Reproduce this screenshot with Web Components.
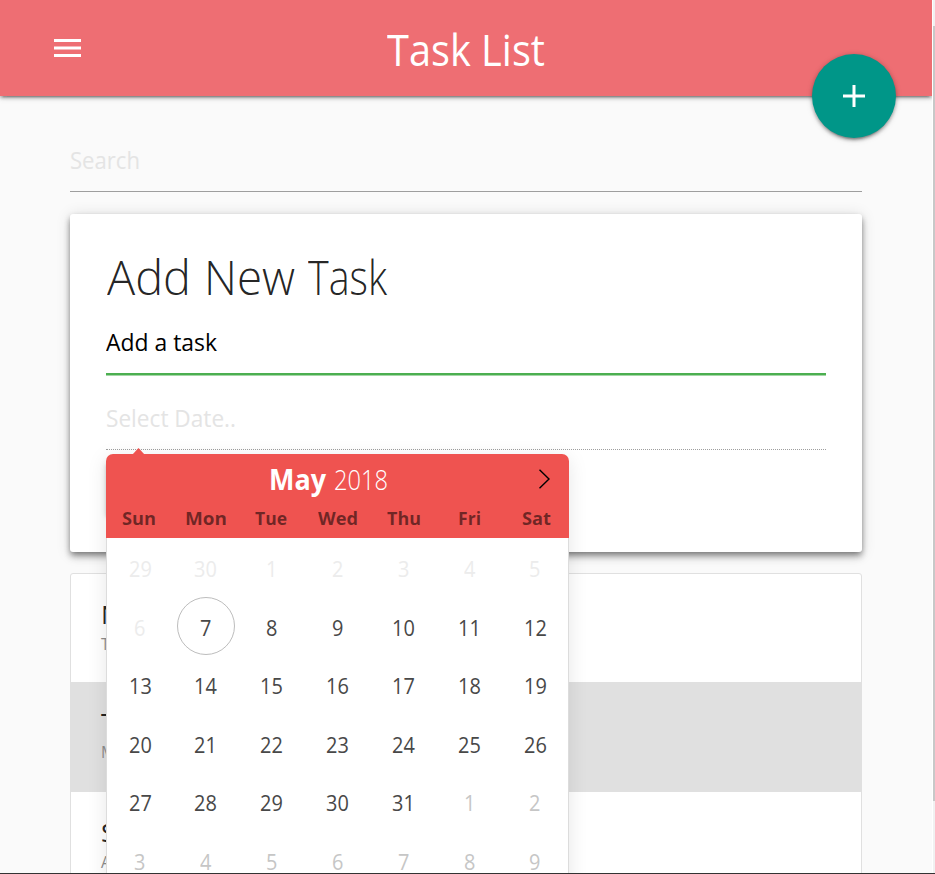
<!DOCTYPE html>
<html lang="en">
<head>
<meta charset="utf-8">
<title>Task List</title>
<style>
body{margin:0;background:#fafafa;font-family:"Open Sans","Noto Sans",sans-serif;color:rgba(0,0,0,.87)}
</style>
</head>
<body>
<task-app></task-app>
<script>
const define = (name, html, setup) => {
  const t = document.createElement('template');
  t.innerHTML = html;
  customElements.define(name, class extends HTMLElement {
    connectedCallback() {
      if (this.shadowRoot) return;
      this.attachShadow({mode: 'open'}).append(t.content.cloneNode(true));
      if (setup) setup(this, this.shadowRoot);
    }
  });
};

// Text condensed or widened horizontally to the width in its "w" attribute.
define('fit-text', `<style>
:host{display:inline-block;white-space:nowrap}
span{display:inline-block;transform-origin:0 50%}
</style><span><slot></slot></span>`, (el, root) => {
  const s = root.querySelector('span'), w = +el.getAttribute('w');
  const n = s.offsetWidth ? s.getBoundingClientRect().width : w;
  s.style.transform = 'scaleX(' + w / n + ')';
  el.style.width = w + 'px';
});

define('app-bar', `<style>
:host{display:grid;grid-template-columns:1fr auto 1fr;height:96px;background:#ee6e73;color:#fff;position:relative;z-index:1;
box-shadow:0 3px 3px 0 rgba(0,0,0,.14),0 1.5px 7.5px 0 rgba(0,0,0,.12),0 4.5px 1.5px -3px rgba(0,0,0,.2),0 1px 3px rgba(0,0,0,.2)}
.menu{margin:39px 0 0 54px;width:27px;height:18px}
.title{font-size:43.5px;line-height:100px}
.fab{position:absolute;left:812px;top:54px;width:84px;height:84px;border-radius:50%;background:#009688;display:grid;place-items:center;
box-shadow:0 3px 3px 0 rgba(0,0,0,.14),0 1.5px 7.5px 0 rgba(0,0,0,.12),0 4.5px 1.5px -3px rgba(0,0,0,.2),0 1px 4px rgba(0,0,0,.2)}
</style>
<svg class="menu" viewBox="0 0 27 18"><path d="M0 0h27v3H0zM0 7.5h27v3H0zM0 15h27v3H0z" fill="#fff"/></svg>
<div class="title"><slot></slot></div>
<div class="fab"><svg width="22" height="22" viewBox="0 0 22 22"><path d="M11 0v22M0 11h22" stroke="#fff" stroke-width="3"/></svg></div>`);

define('text-field', `<style>
:host{display:block;box-sizing:border-box;height:var(--h,63px);font-size:23.5px;line-height:var(--lh,62px);border-bottom:1px solid #9e9e9e;color:#e4e4e4}
:host([active]){height:64px;color:#000;border-bottom:2px solid #4caf50;box-shadow:0 1px 0 0 #a5d6a7;margin-bottom:1px}
:host([dotted]){border-bottom-style:dotted}
fit-text{display:block}
</style><slot></slot>`);

define('add-card', `<style>
:host{display:block;box-sizing:border-box;height:338px;padding:36px;background:#fff;border-radius:3px;
box-shadow:0 6px 7.5px 0 rgba(0,0,0,.14),0 1.5px 15px 0 rgba(0,0,0,.12),0 3px 6px -1.5px rgba(0,0,0,.45)}
.h{display:flex;gap:13px;font-size:48px;font-weight:300;line-height:53px;height:51px;margin-bottom:10px;padding-left:1px}
.btn{margin-top:11px;width:110px;height:54px;border-radius:3px;background:#26a69a;
box-shadow:0 3px 3px 0 rgba(0,0,0,.14),0 1.5px 7.5px 0 rgba(0,0,0,.12),0 4.5px 1.5px -3px rgba(0,0,0,.2)}
slot[name=date]::slotted(*){margin-top:12px}
</style>
<div class="h"><slot name="title"></slot></div>
<slot name="task"></slot><slot name="date"></slot><div class="btn"></div>`);

define('task-item', `<style>
:host{display:block;box-sizing:border-box;height:108px;padding:22px 30px 0}
:host([alt]){background:#e0e0e0;margin:0 -1px;padding-left:31px;height:110px}
.t{font-size:26px;line-height:36px;height:37px}
.d{font-size:15.5px;line-height:22px;color:#8d8d8d}
</style><div class="t"><slot></slot></div><div class="d"><slot name="due"></slot></div>`);

define('task-list', `<style>
:host{display:block;border:1px solid #e0e0e0;border-radius:3px;background:#fff;height:400px}
</style><slot></slot>`);

define('date-picker', `<style>
:host{display:block;position:absolute;left:106px;top:454px;width:463px;z-index:2;border-radius:7px;
box-shadow:0 4px 20px rgba(0,0,0,.1)}
.caret{position:absolute;left:25px;top:-6px;display:block}
.head{height:84px;box-sizing:border-box;background:#ef5350;border-radius:7px 7px 0 0;position:relative}
.month{display:flex;justify-content:center;gap:8px;font-size:28px;line-height:50px;height:49px;color:#fff;padding-right:19px}
.month b{font-weight:700}.month i{font-style:normal;font-weight:300}
.next{position:absolute;left:432px;top:14px}
.week,.grid{display:grid;grid-template-columns:repeat(7,1fr);text-align:center}
.week{font-size:18px;font-weight:700;color:rgba(0,0,0,.54);line-height:31px}
.grid{background:#fff;border:solid #dcdcdc;border-width:0 1px;grid-auto-rows:58.5px;height:351px}
.grid div{font-size:21px;line-height:62px;color:#484848;height:58.5px}
.grid .off{color:#ececec}.grid .next-m{color:#c6c6c6}
.grid .today{box-sizing:border-box;width:58px;height:58px;border:1px solid #bdbdbd;border-radius:50%;justify-self:center;line-height:60px}
</style>
<svg class="caret" width="15" height="7" viewBox="0 0 15 7"><path d="M1 7 7.5 0 14 7z" fill="#ef5350"/></svg>
<div class="head"><div class="month"><b><fit-text w="57">May</fit-text></b><i><fit-text w="54">2018</fit-text></i></div>
<svg class="next" width="14" height="22" viewBox="0 0 14 22"><path d="M1.5 1.7 11 11 1.5 20.3" fill="none" stroke="#000" stroke-width="1.4"/></svg>
<div class="week"></div></div>
<div class="grid"></div>`, (el, root) => {
  const week = root.querySelector('.week'), grid = root.querySelector('.grid');
  const add = (parent, text, w, cls) => {
    const d = document.createElement('div'), f = document.createElement('fit-text');
    f.textContent = text; f.setAttribute('w', w);
    if (cls) d.className = cls;
    d.append(f); parent.append(d);
  };
  Object.entries({Sun: 34, Mon: 42, Tue: 32, Wed: 40, Thu: 34, Fri: 23, Sat: 29}).forEach(([k, w]) => add(week, k, w));
  // The grid opens on Sunday 29 April 2018 and spans six weeks.
  for (let i = 0; i < 42; i++) {
    const n = new Date(2018, 3, 29 + i).getDate();
    add(grid, n, n > 9 ? 22.8 : 11.4, i < 8 ? 'off' : i === 8 ? 'today' : i > 32 ? 'next-m' : '');
  }
});

define('task-app', `<style>
:host{display:grid;grid-template:873px 1px/932px 3px;height:874px;overflow:hidden;position:relative}
.page{overflow:hidden;background:#fafafa}
main{padding:31px 70px 0}
.search{--lh:66px;--h:65px}
add-card{margin-top:22px}
task-list{margin-top:21px}
.bar{box-sizing:border-box;border-left:1px solid #fff;background:#f1f1f1;padding-top:26px}
.thumb{height:775px;background:#c8c8c8}
.edge{grid-column:1/3;background:#333;z-index:3}
</style>
<div class="page">
<app-bar><fit-text w="158">Task List</fit-text></app-bar>
<main>
<text-field class="search"><fit-text w="70">Search</fit-text></text-field>
<add-card>
<fit-text slot="title" w="84">Add</fit-text>
<fit-text slot="title" w="91">New</fit-text>
<fit-text slot="title" w="79">Task</fit-text>
<text-field slot="task" active><fit-text w="111">Add a task</fit-text></text-field>
<text-field slot="date" dotted><fit-text w="130">Select Date..</fit-text></text-field>
</add-card>
<task-list>
<task-item>N<span slot="due">T</span></task-item>
<task-item alt>T<span slot="due">M</span></task-item>
<task-item>S<span slot="due">A</span></task-item>
</task-list>
</main>
<date-picker></date-picker>
</div>
<div class="bar"><div class="thumb"></div></div>
<div class="edge"></div>`);
</script>
</body>
</html>
